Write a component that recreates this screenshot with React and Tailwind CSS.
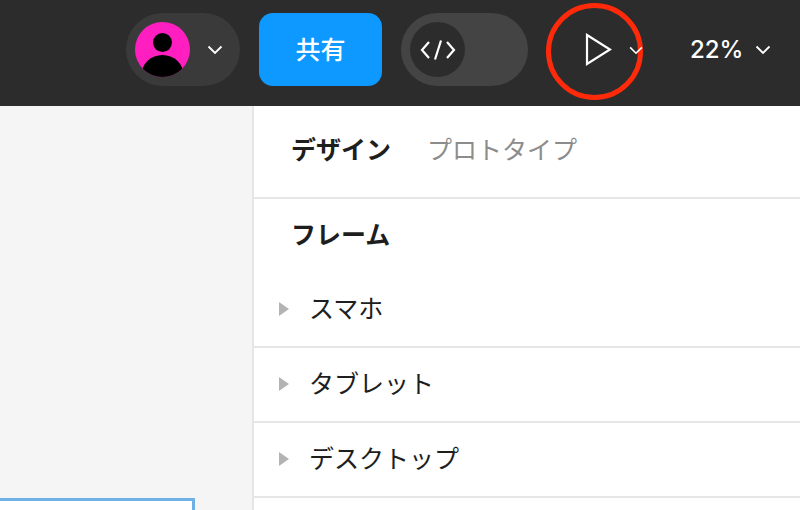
import React from 'react';

const jp = { fontFamily: '"Noto Sans CJK JP", sans-serif' };

const Chevron = ({ className }) => (
  <svg viewBox="0 0 16 10" className={className} fill="none" stroke="currentColor" strokeWidth="1.8">
    <path d="M1.5 1.5 L8 8 L14.5 1.5" />
  </svg>
);

const Row = ({ label }) => (
  <div className="flex h-[75px] items-center border-b-2 border-[#e6e6e6] pb-[4px] pl-[25px]">
    <span className="mt-[2px] h-0 w-0 border-y-[7px] border-l-[10px] border-y-transparent border-l-[#b3b3b3]" />
    <span className="ml-[20px] text-[25px] leading-none text-[#1e1e1e]">{label}</span>
  </div>
);

const App = () => {
  return (
    <div className="flex h-[510px] w-[800px] flex-col overflow-hidden bg-white" style={jp}>
      <header className="relative flex h-[106px] shrink-0 items-center bg-[#2c2c2c] pb-[7px] pl-[126px] text-white">
        <div className="flex h-[73px] w-[114px] items-center rounded-full bg-[#3a3a3a] pl-[9px]">
          <svg viewBox="0 0 55 55" className="h-[55px] w-[55px] shrink-0">
            <clipPath id="avatar">
              <circle cx="27.5" cy="27.5" r="27.5" />
            </clipPath>
            <g clipPath="url(#avatar)">
              <rect width="55" height="55" fill="#ff1fc0" />
              <circle cx="27.5" cy="20.5" r="9.5" fill="#000" />
              <ellipse cx="27.5" cy="53" rx="21" ry="20" fill="#000" />
            </g>
          </svg>
          <Chevron className="ml-[17px] h-[10px] w-[16px]" />
        </div>
        <button className="ml-[19px] flex h-[73px] w-[123px] items-center justify-center rounded-[14px] bg-[#0d99ff] pb-[2px] text-[25px] font-medium">
          共有
        </button>
        <div className="ml-[19px] flex h-[73px] w-[127px] items-center rounded-full bg-[#444444] pl-[9px]">
          <div className="flex h-[55px] w-[55px] items-center justify-center rounded-full bg-[#2c2c2c]">
            <svg viewBox="0 0 36 22" className="h-[22px] w-[36px]" fill="none" stroke="#fff" strokeWidth="2.2">
              <path d="M9 3 L2 11 L9 19 M27 3 L34 11 L27 19 M21 1.5 L15 20.5" />
            </svg>
          </div>
        </div>
        <svg viewBox="0 0 27 33" className="ml-[57px] h-[33px] w-[27px]" fill="none" stroke="#fff" strokeWidth="2.2">
          <path d="M2 2 L25 16.5 L2 31 Z" />
        </svg>
        <Chevron className="relative z-10 ml-[16px] mt-[2px] h-[9px] w-[16px]" />
        <span className="ml-[46px] text-[24px] font-medium leading-none" style={{ fontFamily: 'Inter, sans-serif' }}>
          22%
        </span>
        <Chevron className="ml-[12px] h-[10px] w-[16px]" />
        {/* annotation over the toolbar */}
        <div className="absolute left-[546px] top-[3px] h-[97px] w-[97px] rounded-full border-[5px] border-[#ff2a0a]" />
      </header>
      <div className="flex min-h-0 flex-1">
        <main className="flex w-[252px] shrink-0 flex-col justify-end bg-[#f5f5f5]">
          <div className="h-[12px] w-[195px] border-[3px] border-b-0 border-l-0 border-[#6fb1e4] bg-white" />
        </main>
        <aside className="flex-1 border-l-2 border-[#e6e6e6]">
          <div className="flex h-[93px] items-center border-b-2 border-[#e6e6e6] pb-[6px] pl-[37px] text-[25px] leading-none">
            <span className="font-bold text-[#1e1e1e]">デザイン</span>
            <span className="ml-[36px] text-[#8c8c8c]">プロトタイプ</span>
          </div>
          <div className="flex h-[74px] items-center pb-[5px] pl-[37px] text-[25px] font-bold leading-none text-[#1e1e1e]">
            フレーム
          </div>
          <Row label="スマホ" />
          <Row label="タブレット" />
          <Row label="デスクトップ" />
        </aside>
      </div>
    </div>
  );
};

export default App;
